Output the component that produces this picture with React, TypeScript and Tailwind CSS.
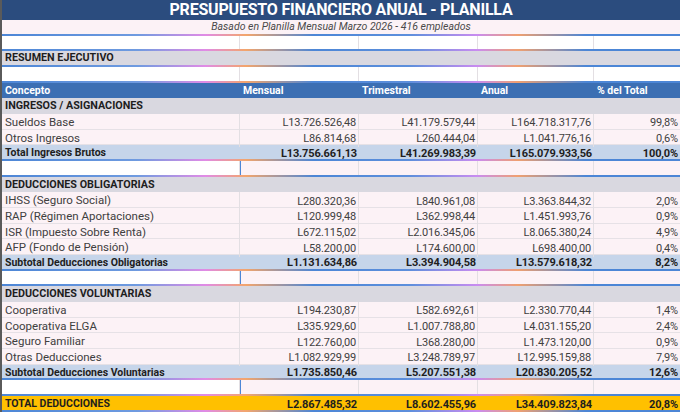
import React from 'react';

type Row = { label: string; m: string; t: string; a: string; p: string };

const ingresos: Row[] = [
  { label: 'Sueldos Base', m: 'L13.726.526,48', t: 'L41.179.579,44', a: 'L164.718.317,76', p: '99,8%' },
  { label: 'Otros Ingresos', m: 'L86.814,68', t: 'L260.444,04', a: 'L1.041.776,16', p: '0,6%' },
];

const obligatorias: Row[] = [
  { label: 'IHSS (Seguro Social)', m: 'L280.320,36', t: 'L840.961,08', a: 'L3.363.844,32', p: '2,0%' },
  { label: 'RAP (Régimen Aportaciones)', m: 'L120.999,48', t: 'L362.998,44', a: 'L1.451.993,76', p: '0,9%' },
  { label: 'ISR (Impuesto Sobre Renta)', m: 'L672.115,02', t: 'L2.016.345,06', a: 'L8.065.380,24', p: '4,9%' },
  { label: 'AFP (Fondo de Pensión)', m: 'L58.200,00', t: 'L174.600,00', a: 'L698.400,00', p: '0,4%' },
];

const voluntarias: Row[] = [
  { label: 'Cooperativa', m: 'L194.230,87', t: 'L582.692,61', a: 'L2.330.770,44', p: '1,4%' },
  { label: 'Cooperativa ELGA', m: 'L335.929,60', t: 'L1.007.788,80', a: 'L4.031.155,20', p: '2,4%' },
  { label: 'Seguro Familiar', m: 'L122.760,00', t: 'L368.280,00', a: 'L1.473.120,00', p: '0,9%' },
  { label: 'Otras Deducciones', m: 'L1.082.929,99', t: 'L3.248.789,97', a: 'L12.995.159,88', p: '7,9%' },
];

const grid = 'grid grid-cols-[238px_119px_119px_116px_1fr] h-[15.68px] items-center';
const glow =
  'border-b-2 [border-image:linear-gradient(90deg,#4c86d6,#6f9be0_20%,#e08be6_30%,#f3a56c_36%,#4c86d6_46%,#5d8fdc_60%,#c98cf0_70%,#f0a070_76%,#4c86d6_86%,#4c86d6)_1]';
const num = 'text-right pr-[2px] text-[11px] tracking-[-0.15px] leading-none';

function Cell({ children, className = '' }: { children?: React.ReactNode; className?: string }) {
  return <div className={`h-full flex items-center border-r border-[#e3dfe3] ${className}`}>{children}</div>;
}

function DataRow({ r }: { r: Row }) {
  return (
    <div className={`${grid} bg-[#fcf2f6] text-[#404040] border-b border-[#e6e1e6]`}>
      <Cell className="pl-[3px] text-[11.5px]">{r.label}</Cell>
      <Cell className={`justify-end ${num}`}>{r.m}</Cell>
      <Cell className={`justify-end ${num}`}>{r.t}</Cell>
      <Cell className={`justify-end ${num}`}>{r.a}</Cell>
      <div className={`h-full flex items-center justify-end ${num}`}>{r.p}</div>
    </div>
  );
}

function TotalRow({ r, bg }: { r: Row; bg: string }) {
  return (
    <div className={`${grid} ${bg} ${glow} font-bold text-[#1e1e1e]`}>
      <div className="pl-[3px] text-[10.5px]">{r.label}</div>
      <div className={num}>{r.m}</div>
      <div className={num}>{r.t}</div>
      <div className={num}>{r.a}</div>
      <div className={num}>{r.p}</div>
    </div>
  );
}

function Section({ title, className = '' }: { title: string; className?: string }) {
  return (
    <div className={`h-[15.68px] flex items-center bg-[#d9d8e0] pl-[3px] text-[10.75px] font-bold text-[#1e1e1e] ${className}`}>
      {title}
    </div>
  );
}

function BlankRow({ tinted = false }: { tinted?: boolean }) {
  return (
    <div className={`${grid} ${glow} bg-white`}>
      <Cell />
      <Cell className={tinted ? 'bg-[#fcf2f6] border-l border-l-[#4c86d6]' : ''} />
      <Cell className={tinted ? 'bg-[#fcf2f6]' : ''} />
      <Cell className={tinted ? 'bg-[#fcf2f6]' : ''} />
      <div className={`h-full ${tinted ? 'bg-[#fcf2f6]' : ''}`} />
    </div>
  );
}

export default function App() {
  return (
    <div className="w-[680px] h-[412px] overflow-hidden bg-white border-l-2 border-[#5a5a5a] font-['Roboto','Liberation_Sans',sans-serif]">
      <div className="h-[20px] bg-[#2b4c7e] flex items-center justify-center text-white font-bold text-[16px] tracking-[-0.2px]">
        PRESUPUESTO FINANCIERO ANUAL - PLANILLA
      </div>
      <div className={`h-[15.68px] bg-[#fcf2f6] flex items-center justify-center italic text-[10.5px] text-[#4a4a4a] ${glow}`}>
        Basado en Planilla Mensual Marzo 2026 - 416 empleados
      </div>
      <BlankRow />
      <Section title="RESUMEN EJECUTIVO" className={glow} />
      <BlankRow />
      <div className={`${grid} bg-[#3c6fb3] text-white font-bold text-[10.5px]`}>
        <div className="pl-[3px]">Concepto</div>
        <div className="pl-[3px]">Mensual</div>
        <div className="pl-[3px]">Trimestral</div>
        <div className="pl-[3px]">Anual</div>
        <div className="pl-[3px]">% del Total</div>
      </div>
      <Section title="INGRESOS / ASIGNACIONES" />
      {ingresos.map((r) => (
        <DataRow key={r.label} r={r} />
      ))}
      <TotalRow
        bg="bg-[#c6d5ea]"
        r={{ label: 'Total Ingresos Brutos', m: 'L13.756.661,13', t: 'L41.269.983,39', a: 'L165.079.933,56', p: '100,0%' }}
      />
      <BlankRow tinted />
      <Section title="DEDUCCIONES OBLIGATORIAS" />
      {obligatorias.map((r) => (
        <DataRow key={r.label} r={r} />
      ))}
      <TotalRow
        bg="bg-[#c6d5ea]"
        r={{ label: 'Subtotal Deducciones Obligatorias', m: 'L1.131.634,86', t: 'L3.394.904,58', a: 'L13.579.618,32', p: '8,2%' }}
      />
      <BlankRow tinted />
      <Section title="DEDUCCIONES VOLUNTARIAS" />
      {voluntarias.map((r) => (
        <DataRow key={r.label} r={r} />
      ))}
      <TotalRow
        bg="bg-[#c6d5ea]"
        r={{ label: 'Subtotal Deducciones Voluntarias', m: 'L1.735.850,46', t: 'L5.207.551,38', a: 'L20.830.205,52', p: '12,6%' }}
      />
      <BlankRow tinted />
      <TotalRow
        bg="bg-[#ffc000]"
        r={{ label: 'TOTAL DEDUCCIONES', m: 'L2.867.485,32', t: 'L8.602.455,96', a: 'L34.409.823,84', p: '20,8%' }}
      />
    </div>
  );
}
